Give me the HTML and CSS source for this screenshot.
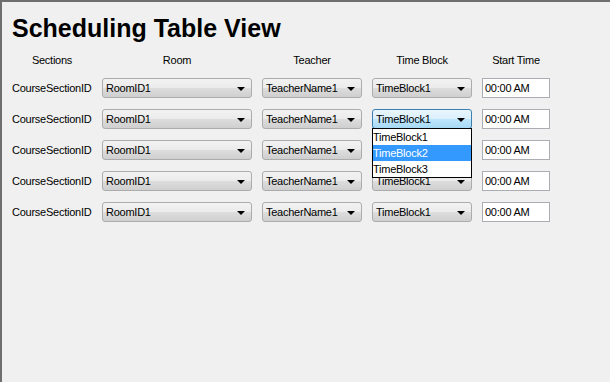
FILE: index.html
```html
<!DOCTYPE html>
<html lang="en">
<head>
  <meta charset="UTF-8">
  <meta name="viewport" content="width=device-width, initial-scale=1">
  <title>Scheduling Table View</title>
  <link rel="stylesheet" href="styles.css">
</head>
<body>
  <div class="window">
    <h1 class="title">Scheduling Table View</h1>

    <div class="schedule">
      <!-- Header row -->
      <div class="head">Sections</div>
      <div class="head">Room</div>
      <div class="head">Teacher</div>
      <div class="head">Time Block</div>
      <div class="head">Start Time</div>

      <!-- Row 1 -->
      <div class="section">CourseSectionID</div>
      <div class="combo">RoomID1<span class="arrow"></span></div>
      <div class="combo">TeacherName1<span class="arrow"></span></div>
      <div class="combo">TimeBlock1<span class="arrow"></span></div>
      <div class="field">00:00 AM</div>

      <!-- Row 2 (time block open) -->
      <div class="section">CourseSectionID</div>
      <div class="combo">RoomID1<span class="arrow"></span></div>
      <div class="combo">TeacherName1<span class="arrow"></span></div>
      <div class="combo open">TimeBlock1<span class="arrow"></span>
        <ul class="dropdown">
          <li>TimeBlock1</li>
          <li class="selected">TimeBlock2</li>
          <li>TimeBlock3</li>
        </ul>
      </div>
      <div class="field">00:00 AM</div>

      <!-- Row 3 -->
      <div class="section">CourseSectionID</div>
      <div class="combo">RoomID1<span class="arrow"></span></div>
      <div class="combo">TeacherName1<span class="arrow"></span></div>
      <div class="combo">TimeBlock1<span class="arrow"></span></div>
      <div class="field">00:00 AM</div>

      <!-- Row 4 -->
      <div class="section">CourseSectionID</div>
      <div class="combo">RoomID1<span class="arrow"></span></div>
      <div class="combo">TeacherName1<span class="arrow"></span></div>
      <div class="combo">TimeBlock1<span class="arrow"></span></div>
      <div class="field">00:00 AM</div>

      <!-- Row 5 -->
      <div class="section">CourseSectionID</div>
      <div class="combo">RoomID1<span class="arrow"></span></div>
      <div class="combo">TeacherName1<span class="arrow"></span></div>
      <div class="combo">TimeBlock1<span class="arrow"></span></div>
      <div class="field">00:00 AM</div>
    </div>
  </div>
</body>
</html>
```

FILE: styles.css
```css
body {
  margin: 0;
  background-color: #f0f0f0;
  font-family: "Liberation Sans", Arial, sans-serif;
  font-size: 11px;
  letter-spacing: -0.25px;
  color: #000000;
}
.window {
  height: 382px;
  box-sizing: border-box;
  border-left: 2px solid #6e6e6e;
  border-top: 2px solid #6e6e6e;
  padding: 12px 10px 0 10px;
}
.title {
  margin: 0;
  font-size: 25px;
  font-weight: bold;
  line-height: 28px;
  letter-spacing: 0;
}
.schedule {
  display: grid;
  grid-template-columns: 80px 150px 100px 100px 68px;
  grid-template-rows: 17px;
  grid-auto-rows: 20px;
  column-gap: 10px;
  row-gap: 11px;
  margin-top: 8px;
}
.head {
  text-align: center;
  line-height: 20px;
}
.section {
  line-height: 20px;
}
.combo {
  position: relative;
  box-sizing: border-box;
  height: 20px;
  border: 1px solid #acacac;
  border-radius: 3px;
  background: linear-gradient(#f2f2f2 0%, #ebebeb 50%, #dddddd 51%, #cfcfcf 100%);
  padding-left: 3px;
  line-height: 18px;
}
.combo .arrow {
  position: absolute;
  right: 6px;
  top: 8px;
  width: 0;
  height: 0;
  border-left: 4px solid transparent;
  border-right: 4px solid transparent;
  border-top: 4px solid #000000;
}
.combo.open {
  border-color: #3c7fb1;
  background: linear-gradient(#eaf6fd 0%, #d9f0fc 50%, #bee6fd 51%, #a7d9f5 100%);
}
.dropdown {
  position: absolute;
  top: 18px;
  left: -1px;
  width: 100px;
  box-sizing: border-box;
  margin: 0;
  padding: 0;
  list-style: none;
  background-color: #ffffff;
  border: 1px solid #000000;
  z-index: 2;
}
.dropdown li {
  height: 16px;
  line-height: 16px;
}
.dropdown li.selected {
  background-color: #3399ff;
  color: #ffffff;
}
.field {
  box-sizing: border-box;
  height: 20px;
  border: 1px solid #abadb3;
  background-color: #ffffff;
  padding-left: 2px;
  line-height: 18px;
}
```
